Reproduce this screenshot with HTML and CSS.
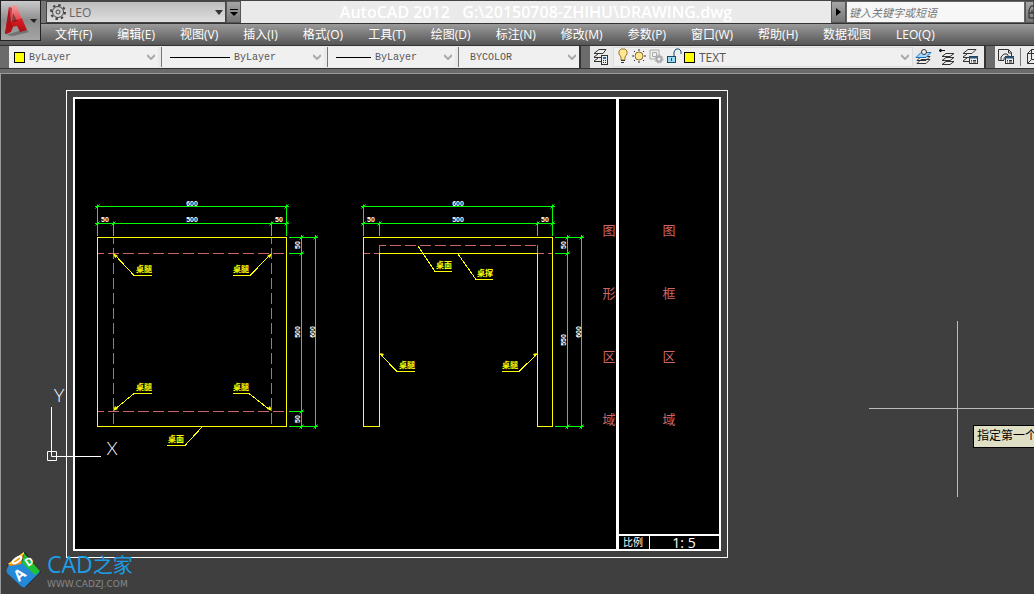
FILE: index.html
```
<!DOCTYPE html>
<html lang="zh-CN">
<head>
    <meta charset="UTF-8">
    <meta name="viewport" content="width=device-width, initial-scale=1.0">
    <title>AutoCAD 2012 - DRAWING.dwg</title>
    <link rel="stylesheet" href="styles.css">
</head>
<body>
    <header>
        <button class="app-button" aria-label="应用程序菜单">
            <svg width="38" height="38" viewBox="0 0 38 38">
                <defs>
                    <linearGradient id="red" x1="0" y1="0" x2="0" y2="1">
                        <stop offset="0" stop-color="#f4868a"/>
                        <stop offset="0.5" stop-color="#dd1c24"/>
                        <stop offset="1" stop-color="#a30d14"/>
                    </linearGradient>
                </defs>
                <path d="M5 33l7 1 16-4 -4-3z" fill="#555" opacity="0.6"/>
                <path d="M4 32L8 5l7-2 11 25-7 2-3-6-6 1-2 6z" fill="url(#red)"/>
                <path d="M4 32L8 5l3 1-1 14 2 5-2 5z" fill="#b01218"/>
                <path d="M12 11l4 8-5 1z" fill="#6c0a0e"/>
                <path d="M8 5l7-2 6 13-11 4z" fill="#fff" opacity="0.2"/>
                <path d="M29 17h7l-3 4z" fill="#222"/>
            </svg>
        </button>

        <div class="title-bar">
            <div class="workspace">
                <svg width="16" height="16" viewBox="0 0 16 16" fill="none" stroke="#444">
                    <circle cx="8" cy="8" r="2"/>
                    <circle cx="8" cy="8" r="5.5"/>
                    <circle cx="8" cy="8" r="7" stroke-width="2" stroke-dasharray="2.5 3"/>
                </svg>
                <select aria-label="工作空间"><option>LEO</option></select>
                <svg width="8" height="5" viewBox="0 0 8 5"><path d="M0 0h8l-4 5z" fill="#333"/></svg>
            </div>
            <button class="title-button" aria-label="自定义快速访问工具栏">
                <svg width="8" height="7" viewBox="0 0 8 7"><path d="M0 0h8v1H0zM0 3h8L4 7z"/></svg>
            </button>
            <h1>AutoCAD 2012 &nbsp;&nbsp;G:\20150708-ZHIHU\DRAWING.dwg</h1>
            <button class="title-button" aria-label="折叠搜索">
                <svg width="5" height="8" viewBox="0 0 5 8"><path d="M0 0l5 4-5 4z"/></svg>
            </button>
            <input class="search" type="text" placeholder="键入关键字或短语" aria-label="搜索">
            <button class="title-button search-go" aria-label="查找">
                <svg width="8" height="14" viewBox="0 0 8 14" fill="none" stroke="#222">
                    <path d="M8 1H5L3 5v8h5M3 8h5M6 5v3"/>
                </svg>
            </button>
        </div>

        <nav>
            <ul>
                <li><a href="#">文件(F)</a></li>
                <li><a href="#">编辑(E)</a></li>
                <li><a href="#">视图(V)</a></li>
                <li><a href="#">插入(I)</a></li>
                <li><a href="#">格式(O)</a></li>
                <li><a href="#">工具(T)</a></li>
                <li><a href="#">绘图(D)</a></li>
                <li><a href="#">标注(N)</a></li>
                <li><a href="#">修改(M)</a></li>
                <li><a href="#">参数(P)</a></li>
                <li><a href="#">窗口(W)</a></li>
                <li><a href="#">帮助(H)</a></li>
                <li><a href="#">数据视图</a></li>
                <li><a href="#">LEO(Q)</a></li>
            </ul>
        </nav>

        <div class="toolbars">
            <div class="toolbar">
                <div class="combo combo-color">
                    <span class="swatch"></span>
                    <select aria-label="颜色"><option>ByLayer</option></select>
                    <svg class="chevron" width="8" height="6" viewBox="0 0 8 6"><path d="M0 1l4 4 4-4"/></svg>
                </div>
                <div class="combo combo-linetype">
                    <span class="line"></span>
                    <select aria-label="线型"><option>ByLayer</option></select>
                    <svg class="chevron" width="8" height="6" viewBox="0 0 8 6"><path d="M0 1l4 4 4-4"/></svg>
                </div>
                <div class="combo combo-weight">
                    <span class="line line-short"></span>
                    <select aria-label="线宽"><option>ByLayer</option></select>
                    <svg class="chevron" width="8" height="6" viewBox="0 0 8 6"><path d="M0 1l4 4 4-4"/></svg>
                </div>
                <div class="combo combo-plot">
                    <select aria-label="打印样式"><option>BYCOLOR</option></select>
                    <svg class="chevron" width="8" height="6" viewBox="0 0 8 6"><path d="M0 1l4 4 4-4"/></svg>
                </div>
            </div>

            <div class="toolbar toolbar-layers">
                <button class="tool" aria-label="图层特性管理器">
                    <svg width="18" height="18" viewBox="0 0 18 18" fill="#eee" stroke="#333">
                        <path d="M2 13.500h7M2 9.500h7M2 13l4-3M2 9l4-3M2 5.500l5-4h7l-3 4z"/>
                        <rect x="9.500" y="7.500" width="6" height="9"/>
                        <path d="M11 10h3" stroke="#1673c4" stroke-width="2"/>
                        <path d="M11 12.500h3M11 14.500h3" stroke-dasharray="1 1"/>
                    </svg>
                </button>
                <div class="combo combo-layer">
                    <svg width="66" height="18" viewBox="0 0 66 18" fill="none">
                        <path d="M3 9L1 6V3l2-2h4l2 2v3L7 9v3H3z" fill="#ffe793" stroke="#9a7626"/>
                        <path d="M3 12.500h4M3 14.500h3" stroke="#333"/>
                        <circle cx="21" cy="8" r="4" fill="#ffe793" stroke="#8c6a22"/>
                        <path d="M21 1v2M21 13v2M14 8h2M26 8h2M16 3l1 1M25 12l1 1M26 3l-1 1M17 12l-1 1" stroke="#333"/>
                        <path d="M32 2h9v6M32 2v9h5M34.500 4.500h4v4h-4z" stroke="#aaa"/>
                        <circle cx="41" cy="11" r="2.500" stroke="#aaa" stroke-width="2"/>
                        <circle cx="41" cy="11" r="4" stroke="#aaa" stroke-dasharray="2 1"/>
                        <rect x="49.500" y="8.500" width="8" height="6" fill="#9bdcf2" stroke="#174c66"/>
                        <path d="M56 8V4l2-3h3l2 2v3" stroke="#174c66"/>
                        <path d="M53.500 10v3" stroke="#174c66"/>
                    </svg>
                    <span class="swatch"></span>
                    <select aria-label="图层"><option>TEXT</option></select>
                    <svg class="chevron" width="8" height="6" viewBox="0 0 8 6"><path d="M0 1l4 4 4-4"/></svg>
                </div>
                <button class="tool" aria-label="将对象的图层置为当前">
                    <svg width="18" height="18" viewBox="0 0 18 18" fill="#eee" stroke="#333">
                        <path d="M2 15.500l4-4h9l-4 4zM2 12.500l4-4h9l-4 4z"/>
                        <path d="M1 9.500l5-5h10l-5 5z" fill="#a9d7f5" stroke="#1673c4"/>
                        <circle cx="9" cy="4" r="2.500"/>
                    </svg>
                </button>
                <button class="tool" aria-label="上一个图层">
                    <svg width="18" height="18" viewBox="0 0 18 18" fill="#eee" stroke="#333">
                        <path d="M4 16.500l4-3h8l-4 3zM4 12.500l4-3h8l-4 3zM4 8.500l4-3h8l-4 3z"/>
                        <path d="M3 1L1 2.500 3 4zM2 2.500h5" fill="#111" stroke="#111"/>
                    </svg>
                </button>
                <button class="tool" aria-label="图层状态管理器">
                    <svg width="18" height="18" viewBox="0 0 18 18" fill="#eee" stroke="#333">
                        <path d="M2 13.500h6M2 9.500h6M2 13l4-3M2 9l4-3M2 5.500l5-4h8l-4 4z"/>
                        <rect x="8.500" y="8.500" width="8" height="7"/>
                        <path d="M8 9.500h9" stroke="#1f5688" stroke-width="2"/>
                        <path d="M10 12.500h1M12 12.500h3M10 14h1M12 14h3"/>
                    </svg>
                </button>
            </div>

            <div class="toolbar toolbar-blocks">
                <button class="tool" aria-label="外部参照">
                    <svg width="18" height="18" viewBox="0 0 18 18" fill="none" stroke="#333">
                        <path d="M7 12.500H1.500v-11h10l3 3V8M11.500 2v3h3"/>
                        <path d="M4 13V9l3-3h3l2 3M7 12v-2l2-1"/>
                        <rect x="8.500" y="8.500" width="8" height="7" fill="#eee"/>
                        <path d="M8 9.500h9" stroke="#1f5688" stroke-width="2"/>
                        <path d="M10 12.500h1M12 12.500h3M10 14h1M12 14h3"/>
                    </svg>
                </button>
                <button class="tool tool-divided" aria-label="三维视图">
                    <svg width="18" height="18" viewBox="0 0 18 18" fill="none" stroke="#333">
                        <path d="M1.500 5.500l4-4h10v10l-4 4h-10zM1.500 5.500h10v10M11.500 5.500l4-4M5.500 1.500v10h10M1.500 15.500l4-4"/>
                    </svg>
                </button>
            </div>
        </div>
    </header>

    <main>
        <svg class="drawing" width="100%" height="100%" role="img" aria-label="桌子图纸">
            <defs>
                <path id="tick" d="M-2 2L2 -2M-2 0H2M0 -2V2"/>
            </defs>
            <g transform="translate(0 -74)">
                <!-- sheet frame -->
                <rect class="thin" x="66.500" y="90.500" width="661" height="467"/>
                <rect class="sheet" x="74" y="98" width="646" height="452"/>
                <path class="thick" d="M617.500 98V550"/>
                <path class="medium" d="M618 535H720"/>
                <path class="thin" d="M649.500 536V549"/>

                <!-- hidden lines -->
                <g class="hidden-line">
                    <path d="M113.500 238V426M271.500 238V426"/>
                    <path d="M98 253.500H286M98 411.500H286"/>
                    <path d="M380 245.500H537"/>
                    <path d="M364 253.500H379M538 253.500H552"/>
                </g>
                <path class="hidden-edge" d="M379.500 245V253M537.500 245V253"/>

                <!-- outlines -->
                <g class="outline">
                    <rect x="97.500" y="237.500" width="189" height="189"/>
                    <path d="M363.500 426.500V237.500H552.500V426.500H537.500V253.500H379.500V426.500Z"/>
                    <path d="M114 254L134 275.500H152M271 254L250 275.500H233"/>
                    <path d="M114 410L134 393.500H152M270 410L249 393.500H233"/>
                    <path d="M202 427L185 445.500H167"/>
                    <path d="M418 246L435 271.500H452M458 254L476 279.500H493"/>
                    <path d="M380 354L397 371.500H415M537 354L519 371.500H502"/>
                </g>
                <g class="leader-end">
                    <path d="M113 253l5 3-3 2zM272 253l-5 3 3 2zM113 411l5-2-3-3zM272 411l-5-2 3-3z"/>
                    <path d="M380 353l4 1-2 3zM537 353l-4 1 2 3z"/>
                </g>

                <!-- dimensions -->
                <g class="dimension">
                    <path d="M95 206.500H289M95 223.500H289M97.500 206V236M286.500 206V236M113.500 223V236M271.500 223V236"/>
                    <path d="M361 206.500H555M361 223.500H555M363.500 206V236M552.500 206V236M379.500 223V236M537.500 223V236"/>
                    <path d="M301.500 235V429M315.500 235V429M289 237.500H318M289 253.500H303M289 411.500H303M289 426.500H318"/>
                    <path d="M567.500 235V429M581.500 235V429M555 237.500H584M555 253.500H569M555 426.500H584"/>
                    <use href="#tick" x="97.500" y="206.500"/><use href="#tick" x="286.500" y="206.500"/>
                    <use href="#tick" x="97.500" y="223.500"/><use href="#tick" x="113.500" y="223.500"/>
                    <use href="#tick" x="271.500" y="223.500"/><use href="#tick" x="286.500" y="223.500"/>
                    <use href="#tick" x="363.500" y="206.500"/><use href="#tick" x="552.500" y="206.500"/>
                    <use href="#tick" x="363.500" y="223.500"/><use href="#tick" x="379.500" y="223.500"/>
                    <use href="#tick" x="537.500" y="223.500"/><use href="#tick" x="552.500" y="223.500"/>
                    <use href="#tick" x="301.500" y="237.500"/><use href="#tick" x="315.500" y="237.500"/>
                    <use href="#tick" x="301.500" y="253.500"/><use href="#tick" x="301.500" y="411.500"/>
                    <use href="#tick" x="301.500" y="426.500"/><use href="#tick" x="315.500" y="426.500"/>
                    <use href="#tick" x="567.500" y="237.500"/><use href="#tick" x="581.500" y="237.500"/>
                    <use href="#tick" x="567.500" y="253.500"/>
                    <use href="#tick" x="567.500" y="426.500"/><use href="#tick" x="581.500" y="426.500"/>
                </g>
                <g class="dimension-text">
                    <text x="192" y="206">600</text>
                    <text x="105" y="222">50</text>
                    <text x="192" y="222">500</text>
                    <text x="279" y="222">50</text>
                    <text x="458" y="206">600</text>
                    <text x="371" y="222">50</text>
                    <text x="458" y="222">500</text>
                    <text x="545" y="222">50</text>
                    <text transform="translate(300 245) rotate(-90)">50</text>
                    <text transform="translate(300 332) rotate(-90)">500</text>
                    <text transform="translate(315 332) rotate(-90)">600</text>
                    <text transform="translate(300 419) rotate(-90)">50</text>
                    <text transform="translate(566 245) rotate(-90)">50</text>
                    <text transform="translate(566 340) rotate(-90)">550</text>
                    <text transform="translate(581 332) rotate(-90)">600</text>
                </g>
                <g class="label">
                    <text x="144" y="272">桌腿</text>
                    <text x="241" y="272">桌腿</text>
                    <text x="144" y="390">桌腿</text>
                    <text x="241" y="390">桌腿</text>
                    <text x="176" y="442">桌面</text>
                    <text x="444" y="268">桌面</text>
                    <text x="485" y="276">桌撑</text>
                    <text x="407" y="368">桌腿</text>
                    <text x="510" y="368">桌腿</text>
                </g>

                <g class="zone">
                    <text x="609" y="235">图</text>
                    <text x="609" y="298">形</text>
                    <text x="609" y="361">区</text>
                    <text x="609" y="424">域</text>
                    <text x="669" y="235">图</text>
                    <text x="669" y="298">框</text>
                    <text x="669" y="361">区</text>
                    <text x="669" y="424">域</text>
                </g>
                <text class="scale-name" x="633" y="546">比例</text>
                <text class="scale-value" x="684" y="548">1: 5</text>

                <!-- coordinate system -->
                <path class="thin" d="M51.500 407V456.500H101M47.500 451.500h9v9h-9z"/>
                <text class="axis" x="59" y="402">Y</text>
                <text class="axis" x="112" y="455">X</text>

                <path class="crosshair" d="M957.500 321V497M869 408.500H1034"/>
            </g>
        </svg>

        <div class="prompt">指定第一个</div>

        <div class="watermark">
            <svg width="36" height="38" viewBox="0 0 36 38">
                <path d="M1 14L19 1l16 20-15 15z" fill="#222"/>
                <path d="M3 13L15 10 29 18 34 21 19 36Q17 37 15 35L1 22Q0 20 1 18z" fill="#2389d8"/>
                <path d="M18 2l16 18-5 4-13-12z" fill="#1fc234"/>
                <path d="M2 13L18 1l-3 12-11 2z" fill="#f48b13"/>
                <path d="M2 13L18 1v2L5 13z" fill="#ffdf32"/>
                <ellipse cx="11" cy="9" rx="5" ry="2" transform="rotate(-35 11 9)" fill="none" stroke="#fff" stroke-width="2"/>
                <text class="cube-a" transform="translate(13 31) rotate(-40)">A</text>
                <text class="cube-d" transform="translate(22 16) rotate(-35)">D</text>
            </svg>
            <div>
                <div class="watermark-name"><b>CAD</b>之家</div>
                <div class="watermark-url">WWW.CADZJ.COM</div>
            </div>
        </div>
    </main>
</body>
</html>
```
FILE: styles.css
```
* {
    box-sizing: border-box;
}
body {
    display: flex;
    flex-direction: column;
    min-height: 100vh;
    margin: 0;
    overflow-x: hidden;
    background-color: #3f3f3f;
    font-family: "Open Sans", "Noto Sans CJK SC", sans-serif;
    font-size: 12px;
}
button,
select,
input {
    margin: 0;
    padding: 0;
    border: none;
    border-radius: 0;
    background: none;
    color: inherit;
    font: inherit;
}
select {
    flex: 1;
    min-width: 0;
    appearance: none;
}
svg {
    display: block;
    flex-shrink: 0;
}
header {
    position: relative;
    background-color: #6b6b6b;
    padding-bottom: 4px;
    border-bottom: 1px solid #9a9a9a;
}
.app-button {
    position: absolute;
    z-index: 1;
    top: 0;
    left: 0;
    width: 41px;
    height: 41px;
    border: 1px solid #222;
    background: linear-gradient(#c9c9c9, #8c8c8c 50%, #a5a5a5);
}

/* title bar */
.title-bar {
    display: flex;
    height: 24px;
    padding-left: 46px;
    background: linear-gradient(90deg, #777 46px, #eaeaea 46px);
    border-top: 1px solid #444;
    border-bottom: 1px solid #333;
}
.workspace {
    display: flex;
    align-items: center;
    gap: 3px;
    width: 180px;
    padding: 0 2px 0 3px;
    border: 1px solid #444;
    background: linear-gradient(#bdbdbd, #dedede);
    color: #666;
}
.title-button {
    display: flex;
    align-items: center;
    justify-content: center;
    width: 15px;
    border: 1px solid #555;
    background: linear-gradient(#a5a5a5, #777);
}
.title-bar h1 {
    flex: 1;
    margin: 0;
    color: #fff;
    font-size: 16px;
    font-weight: 600;
    line-height: 22px;
    text-align: center;
    white-space: nowrap;
}
.search {
    width: 179px;
    padding: 0 2px;
    border: 1px solid #666;
    background-color: #f7f7f7;
}
.search::placeholder {
    color: #777;
    font-size: 11px;
    font-style: italic;
}
.search-go {
    width: 9px;
}

/* menu */
nav {
    height: 22px;
    padding-left: 55px;
    background: linear-gradient(#9b9b9b, #555);
    border-bottom: 1px solid #333;
}
nav ul {
    display: flex;
    gap: 25px;
    margin: 0;
    padding: 0;
    list-style-type: none;
}
nav a {
    color: #fff;
    line-height: 21px;
    text-decoration: none;
    white-space: nowrap;
}

/* toolbars */
.toolbars {
    display: flex;
    gap: 2px;
    height: 23px;
    background-color: #333;
    border-bottom: 1px solid #333;
}
.toolbar {
    display: flex;
    align-items: center;
    border-left: 9px solid #6b6b6b;
    background-color: #eaeaea;
}
.toolbar-layers {
    flex: 1;
    padding-right: 2px;
}
.toolbar-blocks {
    width: 48px;
    overflow: hidden;
}
.combo {
    display: flex;
    align-items: center;
    gap: 4px;
    height: 20px;
    padding: 0 3px 0 5px;
    background-color: #f0f0f0;
    color: #555;
    font-family: "Liberation Mono", monospace;
    font-size: 10px;
}
.combo + .combo {
    margin-left: 3px;
    border-left: 1px solid #777;
    padding-left: 8px;
}
.combo-color {
    width: 149px;
}
.combo-linetype {
    width: 163px;
}
.combo-weight {
    width: 128px;
}
.combo + .combo-plot {
    width: 121px;
    padding-left: 11px;
}
.combo-layer {
    flex: 1;
    padding-left: 4px;
    border: 1px solid #ddd;
    font-family: "Open Sans", sans-serif;
    font-size: 12px;
}
.combo-layer .swatch {
    margin-left: -4px;
}
.swatch {
    width: 11px;
    height: 11px;
    border: 1px solid #000;
    background-color: #ff0;
}
.line {
    width: 60px;
    height: 1px;
    background-color: #000;
}
.line-short {
    width: 35px;
}
.chevron {
    fill: none;
    stroke: #aaa;
    stroke-width: 2;
}
.tool {
    padding: 0 3px 0 2px;
}
.tool-divided {
    margin-left: 2px;
    padding-left: 5px;
    border-left: 1px solid #777;
}

/* drawing area */
main {
    position: relative;
    display: flex;
    flex: 1;
    min-height: 500px;
    border-left: 1px solid #999;
    overflow: hidden;
}
.drawing {
    flex: 1;
    margin-left: -1px;
    height: auto;
}
.thin,
.medium,
.thick {
    fill: none;
    stroke: #fff;
}
.medium {
    stroke-width: 2;
}
.thick {
    stroke-width: 3;
}
.sheet {
    fill: #000;
    stroke: #fff;
    stroke-width: 2;
}
.hidden-line,
.hidden-edge {
    stroke: #c66;
}
.hidden-line {
    stroke-dasharray: 11 4;
    stroke-dashoffset: 5;
}
.outline {
    fill: none;
    stroke: #ff0;
    shape-rendering: crispEdges;
}
.leader-end {
    fill: #ff0;
}
.dimension {
    fill: none;
    stroke: #0f0;
}
.dimension-text,
.label,
.zone,
.axis,
.scale-name,
.scale-value {
    fill: #fff;
    text-anchor: middle;
}
.dimension-text {
    font-family: "Liberation Sans", sans-serif;
    font-size: 7px;
    font-weight: bold;
}
.label {
    fill: #ff0;
    font-size: 8px;
    font-weight: bold;
}
.zone {
    fill: #c66;
    font-size: 13px;
}
.scale-name {
    font-size: 10px;
}
.scale-value {
    font-size: 14px;
}
.axis {
    font-family: Lato, sans-serif;
    font-size: 18px;
    font-weight: 300;
}
.crosshair {
    stroke: #bbb;
}
.prompt {
    position: absolute;
    top: 351px;
    left: 972px;
    height: 23px;
    padding: 0 3px;
    border: 1px solid #000;
    background-color: #dfdfc5;
    line-height: 19px;
    white-space: nowrap;
}
.watermark {
    position: absolute;
    bottom: 5px;
    left: 5px;
    display: flex;
    gap: 5px;
}
.watermark-name {
    color: #1a9ee8;
    font-size: 20px;
    line-height: 26px;
}
.watermark-name b {
    font-size: 23px;
    font-weight: normal;
}
.watermark-url {
    color: #888;
    font-family: "DejaVu Sans", sans-serif;
    font-size: 9px;
    line-height: 10px;
}
.cube-a,
.cube-d {
    fill: #fff;
    font-size: 15px;
    font-weight: bold;
}
.cube-d {
    font-size: 11px;
}
```
